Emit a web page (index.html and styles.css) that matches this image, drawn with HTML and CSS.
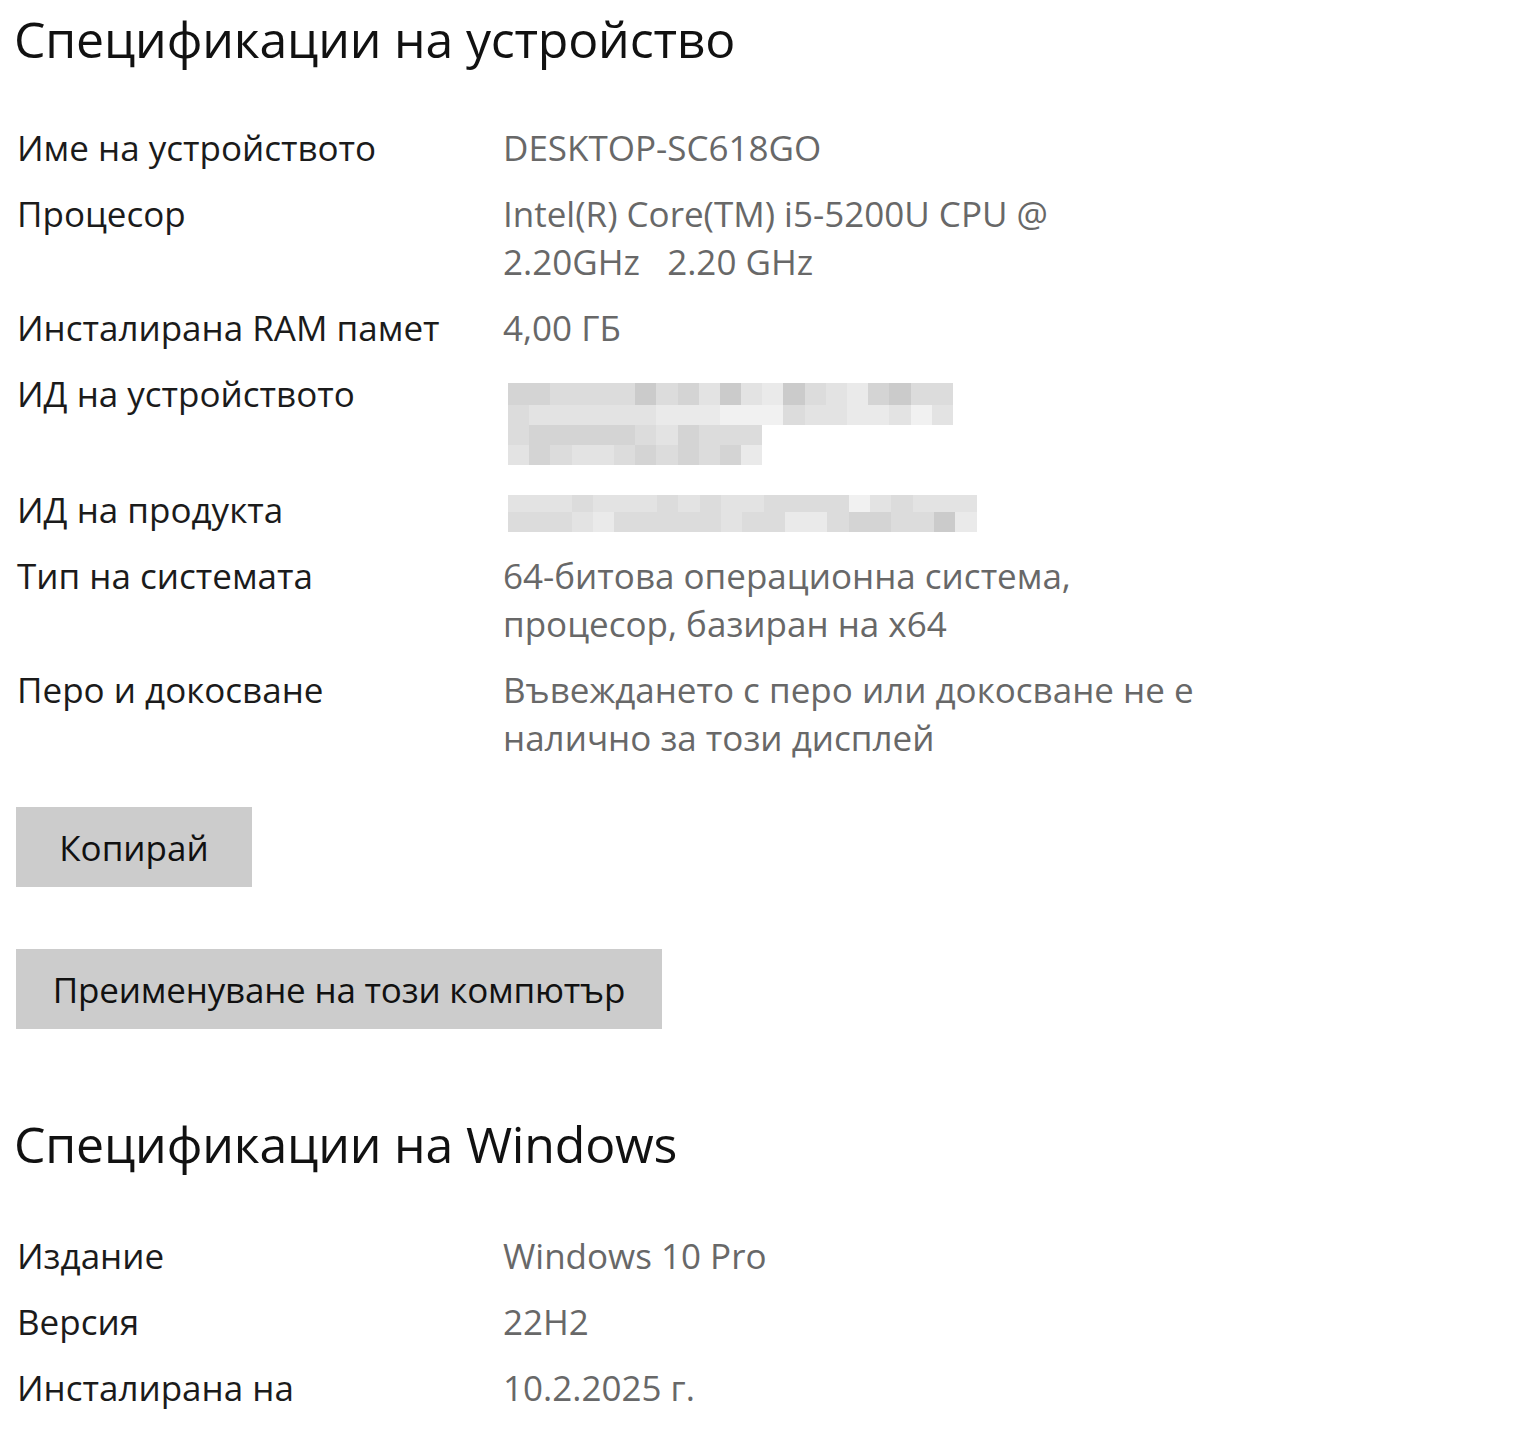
FILE: index.html
```html
<!DOCTYPE html>
<html>

<head>
    <meta charset="utf-8">
    <title>Относно</title>
    <link rel="stylesheet" href="styles.css">
</head>

<body>
    <div id="page">
        <h1 class="title">Спецификации на устройство</h1>
        <div class="specs">
            <div class="row">
                <div class="label">Име на устройството</div>
                <div class="value">DESKTOP-SC618GO</div>
            </div>
            <div class="row">
                <div class="label">Процесор</div>
                <div class="value">Intel(R) Core(TM) i5-5200U CPU @<br>2.20GHz&nbsp;&nbsp; 2.20 GHz</div>
            </div>
            <div class="row">
                <div class="label">Инсталирана RAM памет</div>
                <div class="value">4,00 ГБ</div>
            </div>
            <div class="row">
                <div class="label">ИД на устройството</div>
                <div class="value">
                    <div class="blur blur-dev">
                        <div class="bl tall">
                            <i class="s2"></i><i class="s2"></i><i class="s3"></i><i class="s3"></i><i class="s3"></i><i class="s3"></i><i class="s1"></i><i class="s3"></i><i class="s2"></i><i class="s4"></i><i class="s1"></i><i class="s4"></i><i class="s5"></i><i class="s1"></i><i class="s3"></i><i class="s4"></i><i class="s5"></i><i class="s2"></i><i class="s1"></i><i class="s3"></i><i class="s3"></i>
                        </div>
                        <div class="bl">
                            <i class="s3"></i><i class="s4"></i><i class="s4"></i><i class="s4"></i><i class="s4"></i><i class="s4"></i><i class="s4"></i><i class="s5"></i><i class="s5"></i><i class="s5"></i><i class="s6"></i><i class="s6"></i><i class="s6"></i><i class="s3"></i><i class="s4"></i><i class="s4"></i><i class="s5"></i><i class="s5"></i><i class="s4"></i><i class="s6"></i><i class="s4"></i>
                        </div>
                        <div class="bl">
                            <i class="s3"></i><i class="s2"></i><i class="s2"></i><i class="s2"></i><i class="s2"></i><i class="s2"></i><i class="s3"></i><i class="s4"></i><i class="s2"></i><i class="s3"></i><i class="s3"></i><i class="s3"></i>
                        </div>
                        <div class="bl">
                            <i class="s4"></i><i class="s2"></i><i class="s3"></i><i class="s4"></i><i class="s4"></i><i class="s3"></i><i class="s2"></i><i class="s3"></i><i class="s2"></i><i class="s3"></i><i class="s2"></i><i class="s5"></i>
                        </div>
                    </div>
                </div>
            </div>
            <div class="row">
                <div class="label">ИД на продукта</div>
                <div class="value">
                    <div class="blur blur-prod">
                        <div class="bl thin">
                            <i class="s4"></i><i class="s4"></i><i class="s4"></i><i class="s3"></i><i class="s4"></i><i class="s4"></i><i class="s4"></i><i class="s3"></i><i class="s4"></i><i class="s3"></i><i class="s4"></i><i class="s4"></i><i class="s3"></i><i class="s3"></i><i class="s3"></i><i class="s3"></i><i class="s6"></i><i class="s4"></i><i class="s3"></i><i class="s4"></i><i class="s4"></i><i class="s4"></i>
                        </div>
                        <div class="bl">
                            <i class="s3"></i><i class="s3"></i><i class="s3"></i><i class="s4"></i><i class="s5"></i><i class="s3"></i><i class="s3"></i><i class="s3"></i><i class="s3"></i><i class="s3"></i><i class="s4"></i><i class="s3"></i><i class="s3"></i><i class="s5"></i><i class="s5"></i><i class="s3"></i><i class="s2"></i><i class="s2"></i><i class="s3"></i><i class="s3"></i><i class="s1"></i><i class="s5"></i>
                        </div>
                    </div>
                </div>
            </div>
            <div class="row">
                <div class="label">Тип на системата</div>
                <div class="value">64-битова операционна система,<br>процесор, базиран на x64</div>
            </div>
            <div class="row">
                <div class="label">Перо и докосване</div>
                <div class="value">Въвеждането с перо или докосване не е<br>налично за този дисплей</div>
            </div>
        </div>

        <div class="actions">
            <button class="btn btn-copy">Копирай</button>
            <button class="btn btn-rename">Преименуване на този компютър</button>
        </div>

        <h1 class="title title-win">Спецификации на Windows</h1>
        <div class="specs specs-win">
            <div class="row">
                <div class="label">Издание</div>
                <div class="value">Windows 10 Pro</div>
            </div>
            <div class="row">
                <div class="label">Версия</div>
                <div class="value">22H2</div>
            </div>
            <div class="row">
                <div class="label">Инсталирана на</div>
                <div class="value">10.2.2025 г.</div>
            </div>
        </div>
    </div>
</body>

</html>
```

FILE: styles.css
```css
* {
    padding: 0;
    margin: 0;
    box-sizing: border-box;
}

html,
body {
    background: #fff;
    overflow: hidden;
}

body {
    font-family: "Open Sans", "Noto Sans", sans-serif;
    color: #1b1b1b;
}

#page {
    padding: 3px 0 0 17px;
}

.title {
    margin-left: -3px;
    font-size: 50px;
    font-weight: 400;
    line-height: 72px;
    color: #111;
    letter-spacing: -0.2px;
}

.specs {
    margin-top: 49px;
}

.specs-win {
    margin-top: 52px;
}

.row {
    display: flex;
    margin-bottom: 18px;
    font-size: 35px;
    line-height: 48px;
}

.label {
    width: 486px;
    flex-shrink: 0;
}

.value {
    color: #686868;
}

.blur {
    margin-left: 5px;
}

.blur-dev {
    padding-top: 13px;
    height: 98px;
}

.blur-prod {
    padding-top: 9px;
    height: 48px;
}

.bl {
    display: flex;
    height: 20px;
}

.bl.tall {
    height: 22px;
}

.bl.thin {
    height: 17px;
}

.bl i {
    display: block;
    width: 21.2px;
    height: 100%;
}

.blur-prod .bl i {
    width: 21.3px;
}

.s1 { background: #cbcbcb; }
.s2 { background: #d4d4d4; }
.s3 { background: #dcdcdc; }
.s4 { background: #e3e3e3; }
.s5 { background: #eaeaea; }
.s6 { background: #f1f1f1; }

.actions {
    margin-top: 45px;
}

.btn {
    display: block;
    height: 80px;
    border: none;
    background: #cccccc;
    color: #111;
    font-family: "Open Sans", "Noto Sans", sans-serif;
    font-size: 35px;
    margin-left: -1px;
}

.btn-copy {
    width: 236px;
}

.btn-rename {
    width: 646px;
    margin-top: 62px;
    letter-spacing: -0.2px;
}

.title-win {
    margin-top: 79px;
}
```
